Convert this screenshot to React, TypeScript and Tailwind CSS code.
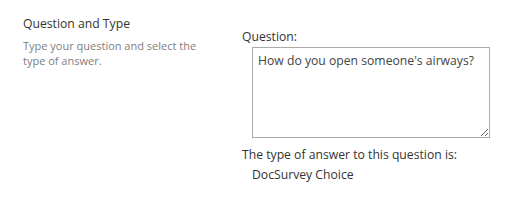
export default function App() {
  return (
    <div className="w-[508px] h-[204px] bg-white flex font-['Open_Sans',sans-serif] antialiased">
      <div className="w-[242px] shrink-0 pl-[23px] pt-[15px]">
        <div className="text-[12.2px] leading-[17px] text-[#333333]">Question and Type</div>
        <div className="mt-[6px] w-[190px] text-[11px] leading-[15px] text-[#808080]">
          Type your question and select the type of answer.
        </div>
      </div>
      <div className="flex flex-col pt-[28px]">
        <div className="text-[12.2px] leading-[17px] text-[#333333]">Question:</div>
        <textarea
          className="ml-[10px] mt-[2px] w-[238px] h-[91px] border border-[#ababab] px-[5px] py-[4px] text-[12.2px] leading-[17px] text-[#444444] resize-y outline-none font-['Open_Sans',sans-serif]"
          defaultValue="How do you open someone's airways?"
        />
        <div className="mt-[8px] text-[12.2px] leading-[17px] text-[#333333]">The type of answer to this question is:</div>
        <div className="ml-[10px] mt-[3px] text-[12.2px] leading-[17px] text-[#333333]">DocSurvey Choice</div>
      </div>
    </div>
  );
}
